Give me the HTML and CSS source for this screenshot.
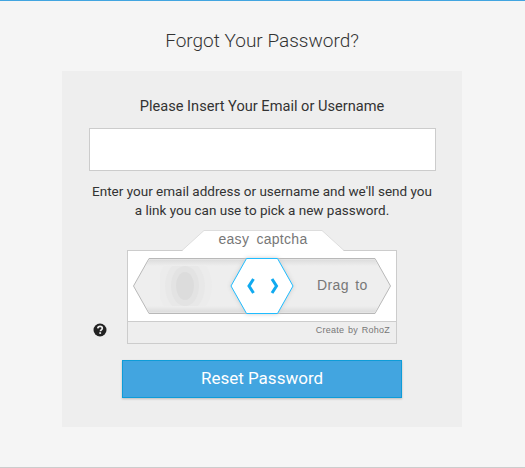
FILE: index.html
```html
<!DOCTYPE html>
<html lang="en">
<head>
  <meta charset="UTF-8" />
  <title>Forgot Your Password?</title>
  <link rel="stylesheet" href="styles.css">
</head>

<body>
  <div class="page">
    <h1>Forgot Your Password?</h1>

    <div class="panel">
      <form>
        <label class="field-label" for="email">Please Insert Your Email or Username</label>
        <input type="text" id="email" class="field-input" />

        <p class="hint">Enter your email address or username and we'll send you a link you can use to pick a new password.</p>

        <div class="captcha-row">
          <span class="help-icon">
            <svg xmlns="http://www.w3.org/2000/svg" viewBox="0 0 14 14">
              <circle cx="7" cy="7" r="6.5" fill="#222" />
              <path d="M4.800 5.400C4.900 4.100 5.800 3.400 7.100 3.400c1.300 0 2.200.8 2.200 1.900 0 .9-.5 1.300-1.100 1.700-.5.3-.7.6-.7 1.200" fill="none" stroke="#eee" stroke-width="1.700" />
              <rect x="6.300" y="9.200" width="1.800" height="1.700" fill="#eee" />
            </svg>
          </span>

          <div class="captcha">
            <div class="captcha-tab">
              <svg class="captcha-tab-bg" xmlns="http://www.w3.org/2000/svg" viewBox="0 0 162 21">
                <path d="M0 20.500L22 .5H140L162 20.500" fill="#fff" stroke="#ddd" />
                <rect x="1" y="20" width="160" height="1" fill="#fff" />
              </svg>
              <span class="captcha-tab-text">easy captcha</span>
            </div>

            <div class="captcha-body">
              <div class="captcha-track">
                <svg class="track-bg" xmlns="http://www.w3.org/2000/svg" viewBox="0 0 258 56">
                  <defs>
                    <linearGradient id="shade-top" x1="0" y1="0" x2="0" y2="1">
                      <stop offset="0" stop-color="#dcdcdc" />
                      <stop offset="1" stop-color="#eee" />
                    </linearGradient>
                    <linearGradient id="shade-bottom" x1="0" y1="1" x2="0" y2="0">
                      <stop offset="0" stop-color="#dcdcdc" />
                      <stop offset="1" stop-color="#eee" />
                    </linearGradient>
                    <clipPath id="blob-box">
                      <rect x="27" y="8" width="52" height="40" />
                    </clipPath>
                  </defs>
                  <path d="M16 .5H242L257.500 28L242 55.500H16L.5 28Z" fill="#eee" stroke="#b8b8b8" />
                  <path d="M16 1.500H242L245 8H13Z" fill="url(#shade-top)" />
                  <path d="M13 48H245L242 54.500H16Z" fill="url(#shade-bottom)" />
                  <g clip-path="url(#blob-box)">
                    <ellipse cx="52" cy="28" rx="27" ry="32" fill="#ececec" />
                    <ellipse cx="52" cy="28" rx="20" ry="26" fill="#e8e8e8" />
                    <ellipse cx="52" cy="28" rx="14" ry="20" fill="#e3e3e3" />
                    <ellipse cx="52" cy="28" rx="9" ry="14" fill="#dcdcdc" />
                  </g>
                </svg>
                <span class="track-text">Drag to</span>
                <div class="handle">
                  <svg xmlns="http://www.w3.org/2000/svg" viewBox="0 0 64 56">
                    <path d="M16.500 .5H47.500L63 28L47.500 55.500H16.500L1 28Z" fill="#fff" stroke="#1fbcff" />
                    <path d="M23.500 21L19 28L23.500 35" fill="none" stroke="#10aaf0" stroke-width="3" />
                    <path d="M42 21L46.500 28L42 35" fill="none" stroke="#10aaf0" stroke-width="3" />
                  </svg>
                </div>
              </div>
              <div class="captcha-footer">Create by RohoZ</div>
            </div>
          </div>
        </div>

        <button type="submit" class="button">Reset Password</button>
      </form>
    </div>
  </div>
</body>
</html>
```

FILE: styles.css
```css
* {
  box-sizing: border-box;
}

body {
  background: #f5f5f5;
  color: #333;
  font-family: 'Roboto', 'Liberation Sans', sans-serif;
  margin: 0;
  padding: 0;
}

.page {
  min-height: 468px;
  border-top: 1px solid #42a5e0;
  border-bottom: 1px solid #ccc;
  padding: 29px 63px 40px 62px;
}

h1 {
  text-align: center;
  font-size: 19px;
  font-weight: 300;
  line-height: 22px;
  color: #333;
  margin: 0 0 19px;
}

.panel {
  background: #eee;
  width: 400px;
  height: 356px;
  padding: 26px 27px 0;
}

.field-label {
  display: block;
  text-align: center;
  font-size: 14.6px;
  font-weight: 400;
  line-height: 18px;
  margin-bottom: 13px;
}

.field-input {
  display: block;
  width: 347px;
  height: 43px;
  background: #fff;
  border: 1px solid #ccc;
  margin: 0;
}

.hint {
  text-align: center;
  font-size: 13.5px;
  font-weight: 400;
  line-height: 19px;
  margin: 11px 0 0;
}

.captcha-row {
  position: relative;
  margin-top: 10px;
  padding-left: 38px;
}

.help-icon {
  position: absolute;
  left: 4px;
  top: 93px;
  width: 14px;
  height: 14px;
}

.help-icon svg {
  display: block;
  width: 14px;
  height: 14px;
}

.captcha {
  width: 270px;
}

.captcha-tab {
  position: relative;
  width: 162px;
  height: 21px;
  margin: 0 0 -1px 55px;
  text-align: center;
  z-index: 1;
}

.captcha-tab-bg {
  position: absolute;
  left: 0;
  top: 0;
  width: 162px;
  height: 21px;
}

.captcha-tab-text {
  position: relative;
  display: block;
  font-family: 'Liberation Sans', Arial, sans-serif;
  font-size: 14px;
  line-height: 18px;
  word-spacing: 3px;
  letter-spacing: 0.3px;
  color: #777;
}

.captcha-body {
  background: #fff;
  border: 1px solid #ccc;
  height: 94px;
}

.captcha-track {
  position: relative;
  width: 258px;
  height: 56px;
  margin: 7px 0 7px 5px;
}

.track-bg {
  display: block;
  width: 258px;
  height: 56px;
}

.track-text {
  position: absolute;
  left: 184px;
  top: 19px;
  font-family: 'Liberation Sans', Arial, sans-serif;
  font-size: 14px;
  line-height: 16px;
  letter-spacing: 0.4px;
  word-spacing: 2px;
  color: #777;
}

.handle {
  position: absolute;
  left: 97px;
  top: 0;
  width: 64px;
  height: 56px;
}

.handle svg {
  display: block;
  width: 64px;
  height: 56px;
  filter: drop-shadow(0 0 2px #ccc);
}

.captcha-footer {
  background: #eee;
  border-top: 1px solid #ccc;
  height: 22px;
  text-align: right;
  padding-right: 6px;
  font-family: 'Liberation Sans', Arial, sans-serif;
  font-size: 9px;
  line-height: 17px;
  letter-spacing: 0.25px;
  word-spacing: 1px;
  color: #777;
}

.button {
  display: block;
  width: 280px;
  height: 38px;
  margin: 16px 0 0 33px;
  padding: 0 0 2px;
  background: #42a5e0;
  color: #fff;
  font-family: inherit;
  font-size: 17px;
  font-weight: 400;
  border: 1px solid #0e9cd8;
  box-shadow: 0 1px 2px #bbb;
  cursor: pointer;
}
```
